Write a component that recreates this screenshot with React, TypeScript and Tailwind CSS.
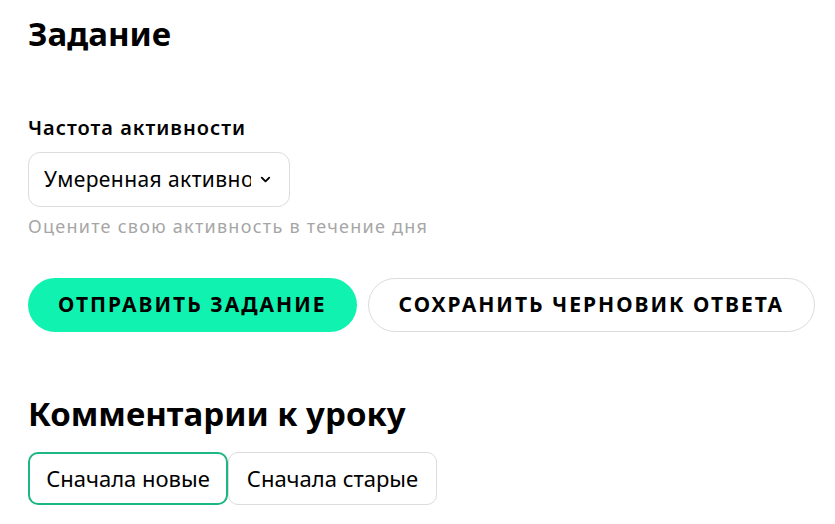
import { ChevronDown } from 'lucide-react';

const font = { fontFamily: '"Noto Sans", "Liberation Sans", sans-serif' };

export default function App() {
    return (
        <div className="min-h-screen bg-white pl-[28px] pt-[14px] text-black" style={font}>
            {/* Task */}
            <h1 className="text-[33px] font-bold leading-[40px]">Задание</h1>

            <div className="mt-[62px]">
                <label className="block text-[20px] font-semibold leading-[24px] tracking-[0.05em]">
                    Частота активности
                </label>
                <div className="mt-[12px] flex h-[55px] w-[262px] items-center justify-between rounded-[12px] border border-[#dcdcdc] pl-[15px] pr-[16px]">
                    <span className="w-[207px] overflow-hidden whitespace-nowrap text-[21px] tracking-[0.02em]">
                        Умеренная активность
                    </span>
                    <ChevronDown className="h-[15px] w-[15px]" strokeWidth={3} />
                </div>
                <p className="mt-[8px] text-[18px] leading-[22px] tracking-[0.07em] text-[#a6a6a6]">
                    Оцените свою активность в течение дня
                </p>
            </div>

            <div className="mt-[41px] flex gap-[11px]">
                <button className="h-[54px] rounded-full bg-[#10f2b0] px-[30px] text-[21px] font-bold uppercase tracking-[2px]">
                    Отправить задание
                </button>
                <button className="h-[54px] rounded-full border border-[#dcdcdc] px-[30px] text-[21px] font-bold uppercase tracking-[2px]">
                    Сохранить черновик ответа
                </button>
            </div>

            {/* Comments */}
            <h2 className="mt-[62px] text-[33px] font-bold leading-[40px]">Комментарии к уроку</h2>
            <div className="mt-[18px] flex">
                <button className="h-[53px] w-[200px] rounded-[10px] border-2 border-[#1cb584] text-[22px]">
                    Сначала новые
                </button>
                <button className="h-[53px] w-[209px] rounded-[10px] border border-[#dcdcdc] text-[22px]">
                    Сначала старые
                </button>
            </div>
        </div>
    );
}
